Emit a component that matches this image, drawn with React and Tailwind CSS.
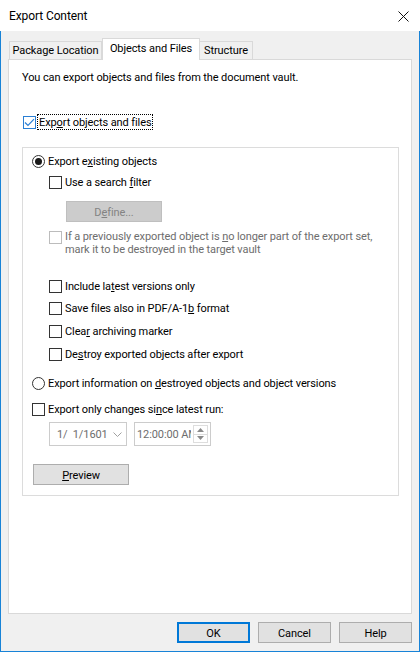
import React from "react";

const Check = ({ checked = false, disabled = false, blue = false, className = "" }) => (
  <span
    className={
      "w-[13px] h-[13px] shrink-0 flex items-center justify-center bg-white border " +
      (disabled ? "border-[#bcbcbc] " : blue ? "border-[#2a7fd4] " : "border-[#333333] ") +
      className
    }
  >
    {checked && (
      <svg width="11" height="9" viewBox="0 0 11 9">
        <path d="M1 4.5 L4 7.5 L10 1.2" stroke="#2a7fd4" strokeWidth="1.2" fill="none" />
      </svg>
    )}
  </span>
);

const Radio = ({ checked = false }) => (
  <span className="w-[13px] h-[13px] shrink-0 rounded-full border border-[#333333] bg-white flex items-center justify-center">
    {checked && <span className="w-[7px] h-[7px] rounded-full bg-[#1a1a1a]" />}
  </span>
);

const Row = ({ children, control, className = "" }) => (
  <div className={"flex items-center h-[16px] " + className}>
    {control}
    <span className="ml-[3px] h-[16px] pt-px whitespace-nowrap">{children}</span>
  </div>
);

export default function App() {
  return (
    <div className="w-[420px] h-[652px] flex flex-col bg-[#f0f0f0] font-['Roboto',sans-serif] text-[11px] tracking-[-0.1px] leading-[16px] text-black">
      {/* Title bar */}
      <div className="h-[31px] shrink-0 bg-white flex items-center justify-between pl-[9px] pr-[11px]">
        <span className="text-[12px] tracking-[-0.1px] pt-px">Export Content</span>
        <svg width="11" height="11" viewBox="0 0 11 11" className="mt-[1px]">
          <path d="M0.5 0.5 L10.5 10.5 M10.5 0.5 L0.5 10.5" stroke="#111" strokeWidth="1" fill="none" />
        </svg>
      </div>

      {/* Body */}
      <div className="flex-1 flex flex-col border-x border-b border-[#1883d7] px-[7px] pt-[7px] pb-[8px]">
        {/* Tabs */}
        <div className="h-[21px] shrink-0 flex items-end pl-px relative z-10">
          <div className="w-[93px] h-[18px] border border-b-0 border-[#d9d9d9] bg-[#f0f0f0] flex items-center justify-center pt-px whitespace-nowrap">
            Package Location
          </div>
          <div className="w-[98px] h-[22px] -mb-px bg-white border border-b-0 border-[#d9d9d9] flex items-center justify-center pb-[2px] whitespace-nowrap">
            Objects and Files
          </div>
          <div className="w-[53px] h-[18px] border border-b-0 border-l-0 border-[#d9d9d9] bg-[#f0f0f0] flex items-center justify-center pt-px whitespace-nowrap">
            Structure
          </div>
        </div>

        {/* Panel */}
        <div className="h-[555px] shrink-0 bg-white border border-[#d9d9d9] pl-[13px] pt-[9px] flex flex-col">
          <div className="h-[16px] pt-px whitespace-nowrap">You can export objects and files from the document vault.</div>

          <div className="mt-[29px] flex items-center h-[16px] pl-px">
            <Check checked blue />
            <span className="ml-[1px] h-[16px] border border-dotted border-black px-px pt-px leading-[14px] whitespace-nowrap">
              Exp<u>o</u>rt objects and files
            </span>
          </div>

          {/* Group box */}
          <div className="mt-[17px] w-[377px] h-[349px] border border-[#dcdcdc] pl-[9px] pt-[5px] flex flex-col">
            <Row control={<Radio checked />}>
              Export e<u>x</u>isting objects
            </Row>
            <Row className="mt-[5px] ml-[17px]" control={<Check />}>
              Use a search <u>f</u>ilter
            </Row>
            <div className="mt-[11px] ml-[34px] w-[96px] h-[21px] bg-[#cccccc] border border-[#bfbfbf] text-[#838383] flex items-center justify-center pt-[2px]">
              <span>
                D<u>e</u>fine...
              </span>
            </div>
            <div className="mt-[8px] ml-[17px] flex items-start">
              <Check disabled className="mt-[1px]" />
              <span className="ml-[3px] leading-[13px] text-[#6d6d6d] whitespace-nowrap">
                If a previously exported object is <u>n</u>o longer part of the export set,
                <br />
                mark it to be destroyed in the target vault
              </span>
            </div>
            <Row className="mt-[22px] ml-[17px]" control={<Check />}>
              Include la<u>t</u>est versions only
            </Row>
            <Row className="mt-[6px] ml-[17px]" control={<Check />}>
              Save files also in PDF/A-1<u>b</u> format
            </Row>
            <Row className="mt-[7px] ml-[17px]" control={<Check />}>
              Clea<u>r</u> archiving marker
            </Row>
            <Row className="mt-[7px] ml-[17px]" control={<Check />}>
              De<u>s</u>troy exported objects after export
            </Row>
            <Row className="mt-[13px]" control={<Radio />}>
              Export information on <u>d</u>estroyed objects and object versions
            </Row>
            <Row className="mt-[10px]" control={<Check />}>
              Export only changes si<u>n</u>ce latest run:
            </Row>
            <div className="mt-[5px] ml-[17px] flex gap-[7px]">
              <div className="w-[78px] h-[24px] border border-[#cccccc] flex items-center justify-between pl-[7px] pr-[4px] text-[#6d6d6d]">
                <span className="whitespace-pre pt-[2px]">1/  1/1601</span>
                <svg width="9" height="5" viewBox="0 0 9 5">
                  <path d="M0.5 0.5 L4.5 4.5 L8.5 0.5" stroke="#a0a0a0" strokeWidth="1" fill="none" />
                </svg>
              </div>
              <div className="w-[77px] h-[24px] border border-[#cccccc] flex items-center pl-[2px] pr-[2px] text-[#6d6d6d]">
                <span className="w-[54px] overflow-hidden whitespace-nowrap pt-[2px]">12:00:00 AM</span>
                <div className="ml-auto w-[15px] h-[18px] flex flex-col border border-[#dddddd]">
                  <div className="flex-1 flex items-center justify-center border-b border-[#dddddd]">
                    <svg width="7" height="4" viewBox="0 0 7 4">
                      <path d="M0 4 L3.5 0 L7 4 Z" fill="#8a8a8a" />
                    </svg>
                  </div>
                  <div className="flex-1 flex items-center justify-center">
                    <svg width="7" height="4" viewBox="0 0 7 4">
                      <path d="M0 0 L3.5 4 L7 0 Z" fill="#8a8a8a" />
                    </svg>
                  </div>
                </div>
              </div>
            </div>
            <div className="mt-[18px] ml-[1px] w-[96px] h-[21px] bg-[#e1e1e1] border border-[#adadad] flex items-center justify-center pt-[2px]">
              <span>
                <u>P</u>review
              </span>
            </div>
          </div>
        </div>

        {/* Buttons */}
        <div className="mt-[8px] flex justify-end gap-[8px]">
          <div className="w-[73px] h-[21px] bg-[#e1e1e1] border-2 border-[#0078d7] flex items-center justify-center pt-[2px]">
            OK
          </div>
          <div className="w-[73px] h-[21px] bg-[#e1e1e1] border border-[#adadad] flex items-center justify-center pt-[2px]">
            Cancel
          </div>
          <div className="w-[73px] h-[21px] bg-[#e1e1e1] border border-[#adadad] flex items-center justify-center pt-[2px]">
            Help
          </div>
        </div>
      </div>
    </div>
  );
}
